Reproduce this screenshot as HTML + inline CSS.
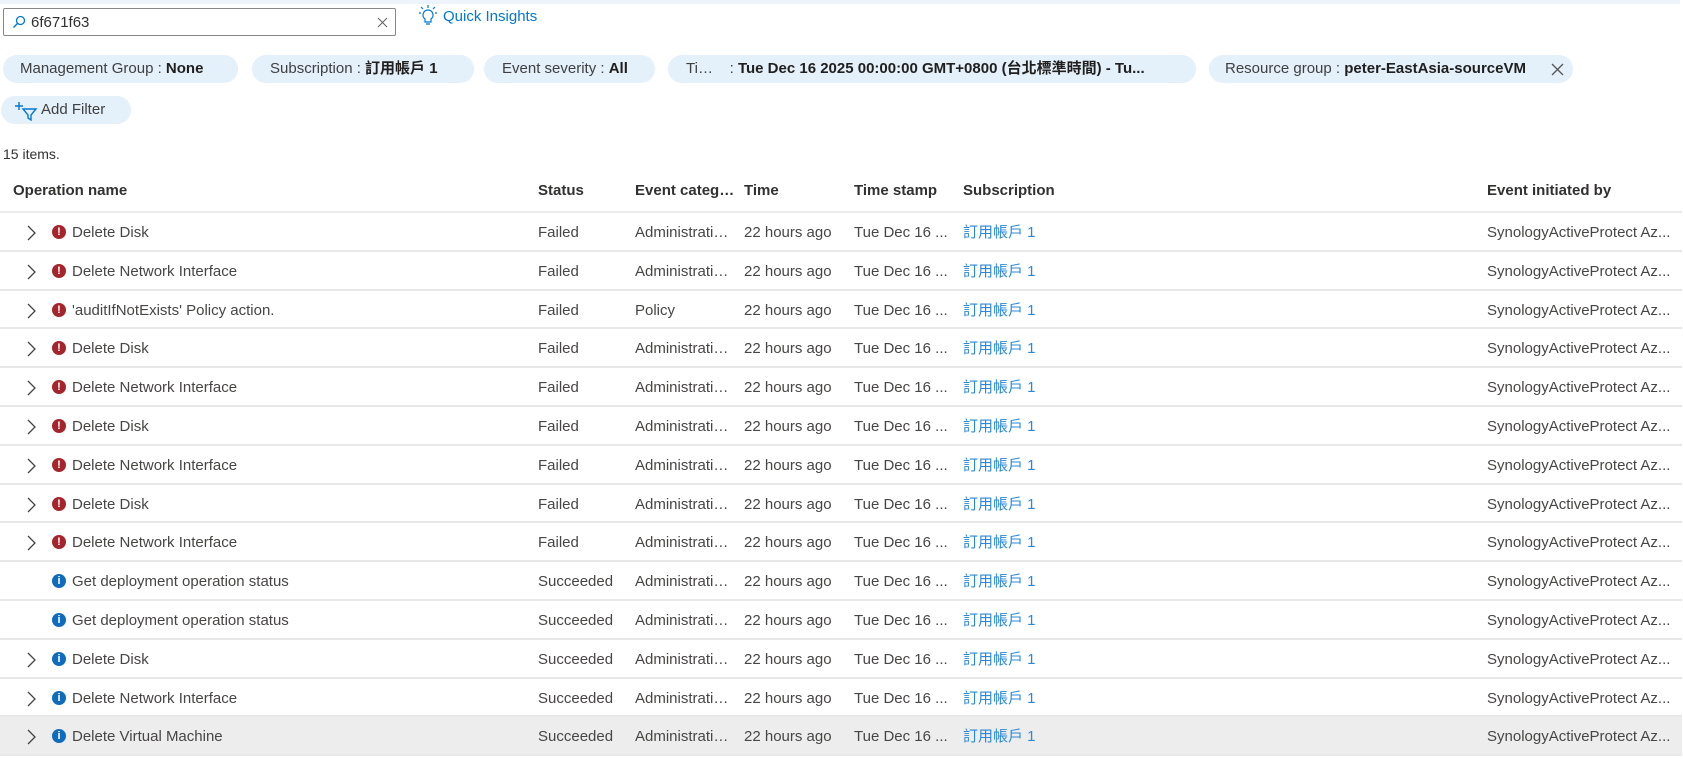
<!DOCTYPE html>
<html><head><meta charset="utf-8"><style>
*{box-sizing:border-box;margin:0;padding:0}
body{width:1683px;height:759px;overflow:hidden;background:#fff;font-family:"Liberation Sans","Noto Sans CJK TC",sans-serif;color:#323130;font-size:15px;position:relative}
.abs{position:absolute}
.strip{left:0;top:0;width:1680px;height:4px;background:#eef4fb}
.search{left:3px;top:8px;width:393px;height:28px;border:1px solid #8a8886;border-radius:2px}
.pill{position:absolute;top:55px;height:28px;border-radius:14px;background:#e4f0fa;font-size:15px;line-height:28px;padding-left:17px;white-space:nowrap;color:#404040}
.pill b{color:#201f1e}
.hdr{position:absolute;top:182px;font-weight:bold;color:#323130;font-size:15px}
.row{position:absolute;left:0;width:1682px;height:38.8px;border-bottom:2px solid #e8e8e8}
.row span{position:absolute;top:11px;white-space:nowrap;color:#484644;line-height:17px;height:17px}
.row .lk{color:#2b88d8;top:11px}
.chev{position:absolute;left:24px;top:12px}
.ic{position:absolute;left:52px;top:12px;width:14px;height:14px;border-radius:50%;color:#fff;font-size:11px;font-weight:bold;text-align:center;line-height:14px}
.err{background:#a4262c}.inf{background:#0f6cbd}
</style></head><body>
<div class="abs strip"></div>
<div class="abs search">
<svg class="abs" style="left:8px;top:6px" width="14" height="14" viewBox="0 0 14 14"><circle cx="8.5" cy="5.5" r="4" fill="none" stroke="#0078d4" stroke-width="1.3"/><path d="M5.6 8.4 1.5 12.5" stroke="#0078d4" stroke-width="1.4"/></svg>
<span class="abs" style="left:27px;top:5px;font-size:15px;color:#323130">6f671f63</span>
<svg class="abs" style="left:373px;top:8px" width="11" height="11" viewBox="0 0 11 11"><path d="M1 1 10 10M10 1 1 10" stroke="#666" stroke-width="1.1"/></svg>
</div>
<svg class="abs" style="left:418px;top:5px" width="20" height="22" viewBox="0 0 20 22"><path d="M10 5a5 5 0 0 0-3 9v3h6v-3a5 5 0 0 0-3-9z" fill="none" stroke="#0078d4" stroke-width="1.2"/><path d="M8 19h4M10 0v3M3 2l2 2M17 2l-2 2M1 8h2M17 8h2" stroke="#0078d4" stroke-width="1.2"/></svg>
<span class="abs" style="left:443px;top:8px;color:#0078d4;font-size:15px">Quick Insights</span>

<div class="pill" style="left:3px;width:235px">Management Group : <b>None</b></div>
<div class="pill" style="left:252px;width:222px;padding-left:18px">Subscription : <b>訂用帳戶 1</b></div>
<div class="pill" style="left:484px;width:171px;padding-left:18px">Event severity : <b>All</b></div>
<div class="pill" style="left:668px;width:528px;padding-left:18px">Ti…&nbsp;&nbsp;&nbsp; : <b>Tue Dec 16 2025 00:00:00 GMT+0800 (台北標準時間) - Tu...</b></div>
<div class="pill" style="left:1209px;width:364px;padding-left:16px">Resource group : <b>peter-EastAsia-sourceVM</b>
<svg class="abs" style="left:342px;top:8px" width="13" height="13" viewBox="0 0 13 13"><path d="M1 1 12 12M12 1 1 12" stroke="#555" stroke-width="1.3"/></svg></div>
<div class="pill" style="left:1px;top:96px;width:130px;padding-left:40px">Add Filter
<svg class="abs" style="left:13px;top:5px" width="24" height="20" viewBox="0 0 24 20"><path d="M5 1v8M1 5h8" stroke="#0078d4" stroke-width="1.4"/><path d="M9 8h13l-5 6v5l-3-2v-3z" fill="none" stroke="#0078d4" stroke-width="1.4"/></svg></div>

<span class="abs" style="left:3px;top:146px;font-size:14px;color:#323130">15 items.</span>

<div class="hdr" style="left:13px">Operation name</div>
<div class="hdr" style="left:538px">Status</div>
<div class="hdr" style="left:635px">Event categ…</div>
<div class="hdr" style="left:744px">Time</div>
<div class="hdr" style="left:854px">Time stamp</div>
<div class="hdr" style="left:963px">Subscription</div>
<div class="hdr" style="left:1487px">Event initiated by</div>
<div class="abs" style="left:0;top:211px;width:1682px;height:2px;background:#ececec"></div>

<div id="rows"></div>
<script>
var d=[["e","Delete Disk","Failed","Administrati…",1],["e","Delete Network Interface","Failed","Administrati…",1],["e","'auditIfNotExists' Policy action.","Failed","Policy",1],["e","Delete Disk","Failed","Administrati…",1],["e","Delete Network Interface","Failed","Administrati…",1],["e","Delete Disk","Failed","Administrati…",1],["e","Delete Network Interface","Failed","Administrati…",1],["e","Delete Disk","Failed","Administrati…",1],["e","Delete Network Interface","Failed","Administrati…",1],["i","Get deployment operation status","Succeeded","Administrati…",0],["i","Get deployment operation status","Succeeded","Administrati…",0],["i","Delete Disk","Succeeded","Administrati…",1],["i","Delete Network Interface","Succeeded","Administrati…",1],["i","Delete Virtual Machine","Succeeded","Administrati…",1]];
var h="";
d.forEach(function(r,i){
var top=213+i*38.8;
h+='<div class="row" style="top:'+top+'px'+(i==13?';background:#ededed':'')+'">'+
(r[4]?'<svg class="chev" width="14" height="16" viewBox="0 0 14 16"><path d="M4 1l7 7-7 7" fill="none" stroke="#444" stroke-width="1.3"/></svg>':'')+
'<div class="ic '+(r[0]=="e"?"err":"inf")+'">'+(r[0]=="e"?"!":"i")+'</div>'+
'<span style="left:72px">'+r[1]+'</span><span style="left:538px">'+r[2]+'</span><span style="left:635px">'+r[3]+'</span><span style="left:744px">22 hours ago</span><span style="left:854px">Tue Dec 16 ...</span><span class="lk" style="left:963px">訂用帳戶 1</span><span style="left:1487px">SynologyActiveProtect Az...</span></div>';
});
document.getElementById("rows").innerHTML=h;
</script>
</body></html>
